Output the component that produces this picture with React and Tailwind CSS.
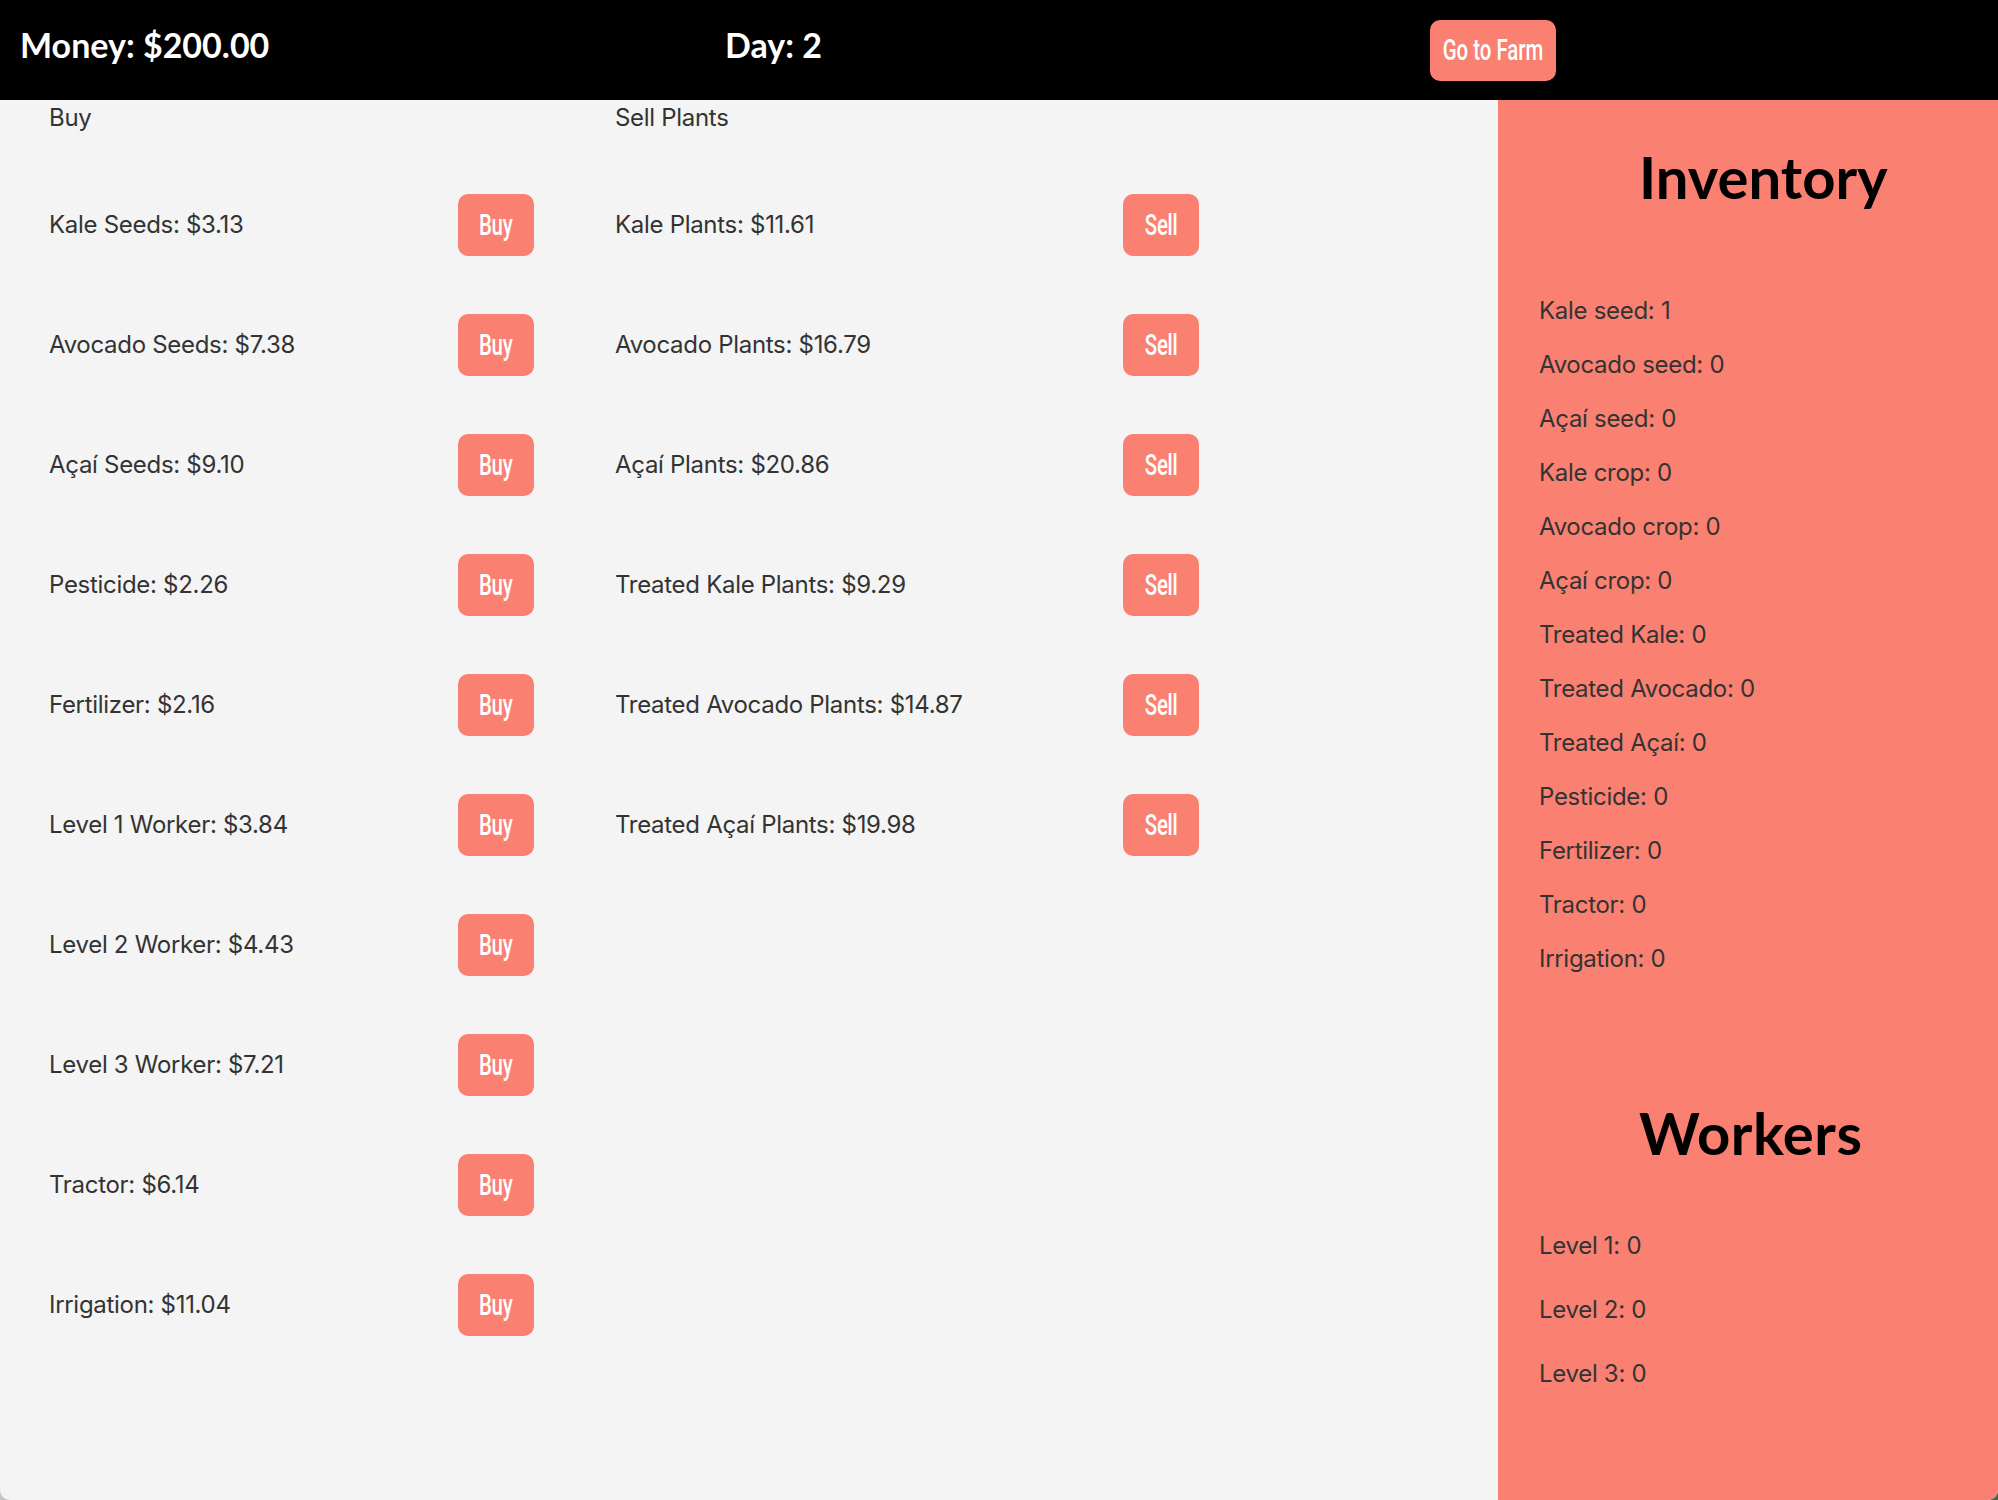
import React from 'react';

const buyItems = [
    { name: 'Kale Seeds', price: 3.13 },
    { name: 'Avocado Seeds', price: 7.38 },
    { name: 'Açaí Seeds', price: 9.1 },
    { name: 'Pesticide', price: 2.26 },
    { name: 'Fertilizer', price: 2.16 },
    { name: 'Level 1 Worker', price: 3.84 },
    { name: 'Level 2 Worker', price: 4.43 },
    { name: 'Level 3 Worker', price: 7.21 },
    { name: 'Tractor', price: 6.14 },
    { name: 'Irrigation', price: 11.04 },
];

const sellItems = [
    { name: 'Kale Plants', price: 11.61 },
    { name: 'Avocado Plants', price: 16.79 },
    { name: 'Açaí Plants', price: 20.86 },
    { name: 'Treated Kale Plants', price: 9.29 },
    { name: 'Treated Avocado Plants', price: 14.87 },
    { name: 'Treated Açaí Plants', price: 19.98 },
];

const inventory = [
    ['Kale seed', 1],
    ['Avocado seed', 0],
    ['Açaí seed', 0],
    ['Kale crop', 0],
    ['Avocado crop', 0],
    ['Açaí crop', 0],
    ['Treated Kale', 0],
    ['Treated Avocado', 0],
    ['Treated Açaí', 0],
    ['Pesticide', 0],
    ['Fertilizer', 0],
    ['Tractor', 0],
    ['Irrigation', 0],
];

const workers = [
    ['Level 1', 0],
    ['Level 2', 0],
    ['Level 3', 0],
];

// condensed label: Roboto squeezed horizontally
const BtnLabel = ({ children }) => (
    <span className="inline-block whitespace-nowrap scale-x-[0.68] font-['Roboto',sans-serif] font-medium text-[30px] leading-none">
        {children}
    </span>
);

const ActionButton = ({ label }) => (
    <button className="w-[76px] h-[62px] bg-[#fa8072] text-white rounded-[10px] flex items-center justify-center">
        <BtnLabel>{label}</BtnLabel>
    </button>
);

const ItemRow = ({ name, price, action }) => (
    <div className="h-[62px] flex items-center justify-between">
        <span>{name}: ${price.toFixed(2)}</span>
        <ActionButton label={action} />
    </div>
);

const App = () => {
    return (
        <div className="w-[1998px] h-[1500px] bg-[linear-gradient(to_right,#c4c4c4_50%,#3b6a48_50%)]">
            <div className="h-full flex flex-col rounded-b-[10px] overflow-hidden bg-[#f4f4f4]">
                {/* Top bar */}
                <div className="h-[100px] shrink-0 bg-black flex items-center text-white font-['Lato',sans-serif] font-bold text-[34px]">
                    <span className="ml-[20px] w-[705px] mb-[11px]">Money: $200.00</span>
                    <span className="w-[705px] mb-[11px]">Day: 2</span>
                    <button className="w-[126px] h-[61px] bg-[#fa8072] text-white rounded-[10px] flex items-center justify-center">
                        <BtnLabel>Go to Farm</BtnLabel>
                    </button>
                </div>

                <div className="flex-1 flex font-['Inter',sans-serif] text-[24px] leading-[36px] tracking-[-0.3px] text-[#333]">
                    {/* Store */}
                    <div className="flex-1 flex">
                        <div className="ml-[49px] w-[485px] flex flex-col gap-[58px]">
                            <h3 className="h-[36px]">Buy</h3>
                            {buyItems.map(item => (
                                <ItemRow key={item.name} name={item.name} price={item.price} action="Buy" />
                            ))}
                        </div>
                        <div className="ml-[81px] w-[584px] flex flex-col gap-[58px]">
                            <h3 className="h-[36px]">Sell Plants</h3>
                            {sellItems.map(item => (
                                <ItemRow key={item.name} name={item.name} price={item.price} action="Sell" />
                            ))}
                        </div>
                    </div>

                    {/* Inventory panel */}
                    <div className="w-[500px] bg-[#fa8072] pt-[42px] pl-[41px]">
                        <h2 className="ml-[100px] font-['Lato',sans-serif] font-bold text-[58px] leading-[70px] tracking-normal text-black">Inventory</h2>
                        <div className="mt-[81px] flex flex-col gap-[18px]">
                            {inventory.map(([label, count]) => (
                                <p key={label}>{label}: {count}</p>
                            ))}
                        </div>
                        <h2 className="mt-[121px] ml-[100px] font-['Lato',sans-serif] font-bold text-[58px] leading-[70px] tracking-[0.5px] text-black">Workers</h2>
                        <div className="mt-[60px] flex flex-col gap-[28px]">
                            {workers.map(([label, count]) => (
                                <p key={label}>{label}: {count}</p>
                            ))}
                        </div>
                    </div>
                </div>
            </div>
        </div>
    );
};

export default App;
